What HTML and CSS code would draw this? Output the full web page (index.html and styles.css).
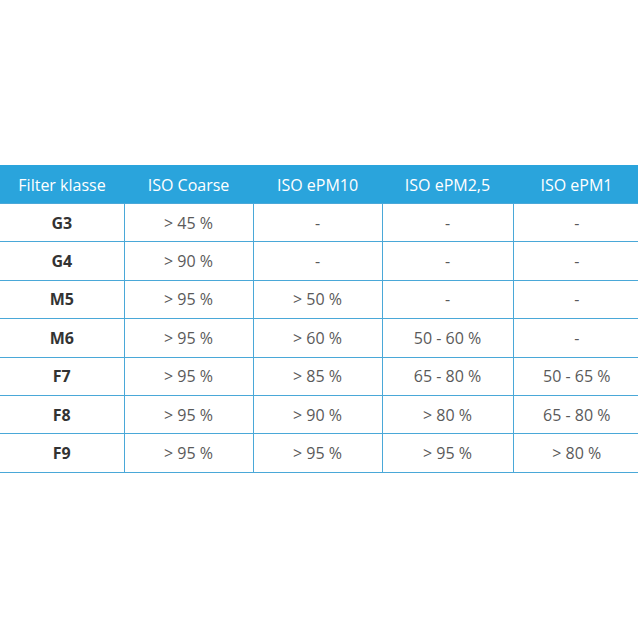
FILE: index.html
```html
<!DOCTYPE html>
<html>
<head>
<meta charset="utf-8">
<link rel="stylesheet" href="styles.css">
</head>
<body>
<div class="wrap">
<table class="filters">
  <colgroup>
    <col class="c0"><col class="c1"><col class="c2"><col class="c3"><col class="c4">
  </colgroup>
  <thead>
    <tr><th>Filter klasse</th><th>ISO Coarse</th><th>ISO ePM10</th><th>ISO ePM2,5</th><th>ISO ePM1</th></tr>
  </thead>
  <tbody>
    <tr><td class="cls">G3</td><td>&gt; 45 %</td><td>-</td><td>-</td><td>-</td></tr>
    <tr><td class="cls">G4</td><td>&gt; 90 %</td><td>-</td><td>-</td><td>-</td></tr>
    <tr><td class="cls">M5</td><td>&gt; 95 %</td><td>&gt; 50 %</td><td>-</td><td>-</td></tr>
    <tr><td class="cls">M6</td><td>&gt; 95 %</td><td>&gt; 60 %</td><td>50 - 60 %</td><td>-</td></tr>
    <tr><td class="cls">F7</td><td>&gt; 95 %</td><td>&gt; 85 %</td><td>65 - 80 %</td><td>50 - 65 %</td></tr>
    <tr><td class="cls">F8</td><td>&gt; 95 %</td><td>&gt; 90 %</td><td>&gt; 80 %</td><td>65 - 80 %</td></tr>
    <tr><td class="cls">F9</td><td>&gt; 95 %</td><td>&gt; 95 %</td><td>&gt; 95 %</td><td>&gt; 80 %</td></tr>
  </tbody>
</table>
</div>
</body>
</html>
```
FILE: styles.css
```css
html, body {
  margin: 0;
  padding: 0;
  background: #ffffff;
}
.wrap {
  padding-top: 165px;
  overflow: hidden;
  width: 638px;
}
.filters {
  border-collapse: collapse;
  table-layout: fixed;
  width: 640px;
  font-family: "Open Sans", "Noto Sans", sans-serif;
  font-size: 16px;
}
.c0 { width: 124px; }
.c1 { width: 129px; }
.c2 { width: 129px; }
.c3 { width: 131px; }
.c4 { width: 127px; }
.filters th {
  background: #2aa4dc;
  color: #ffffff;
  font-weight: normal;
  font-size: 16px;
  height: 37px;
  padding: 0;
  text-align: center;
  border-top: 1px solid #2aa4dc;
}
.filters td {
  height: 37.4px;
  padding: 0;
  text-align: center;
  color: #5a5a5a;
  border: 1px solid #4aa8d8;
}
.filters td:first-child { border-left: none; }
.filters td:last-child { border-right: none; }
.filters td.cls {
  font-weight: bold;
  color: #333333;
}
```
